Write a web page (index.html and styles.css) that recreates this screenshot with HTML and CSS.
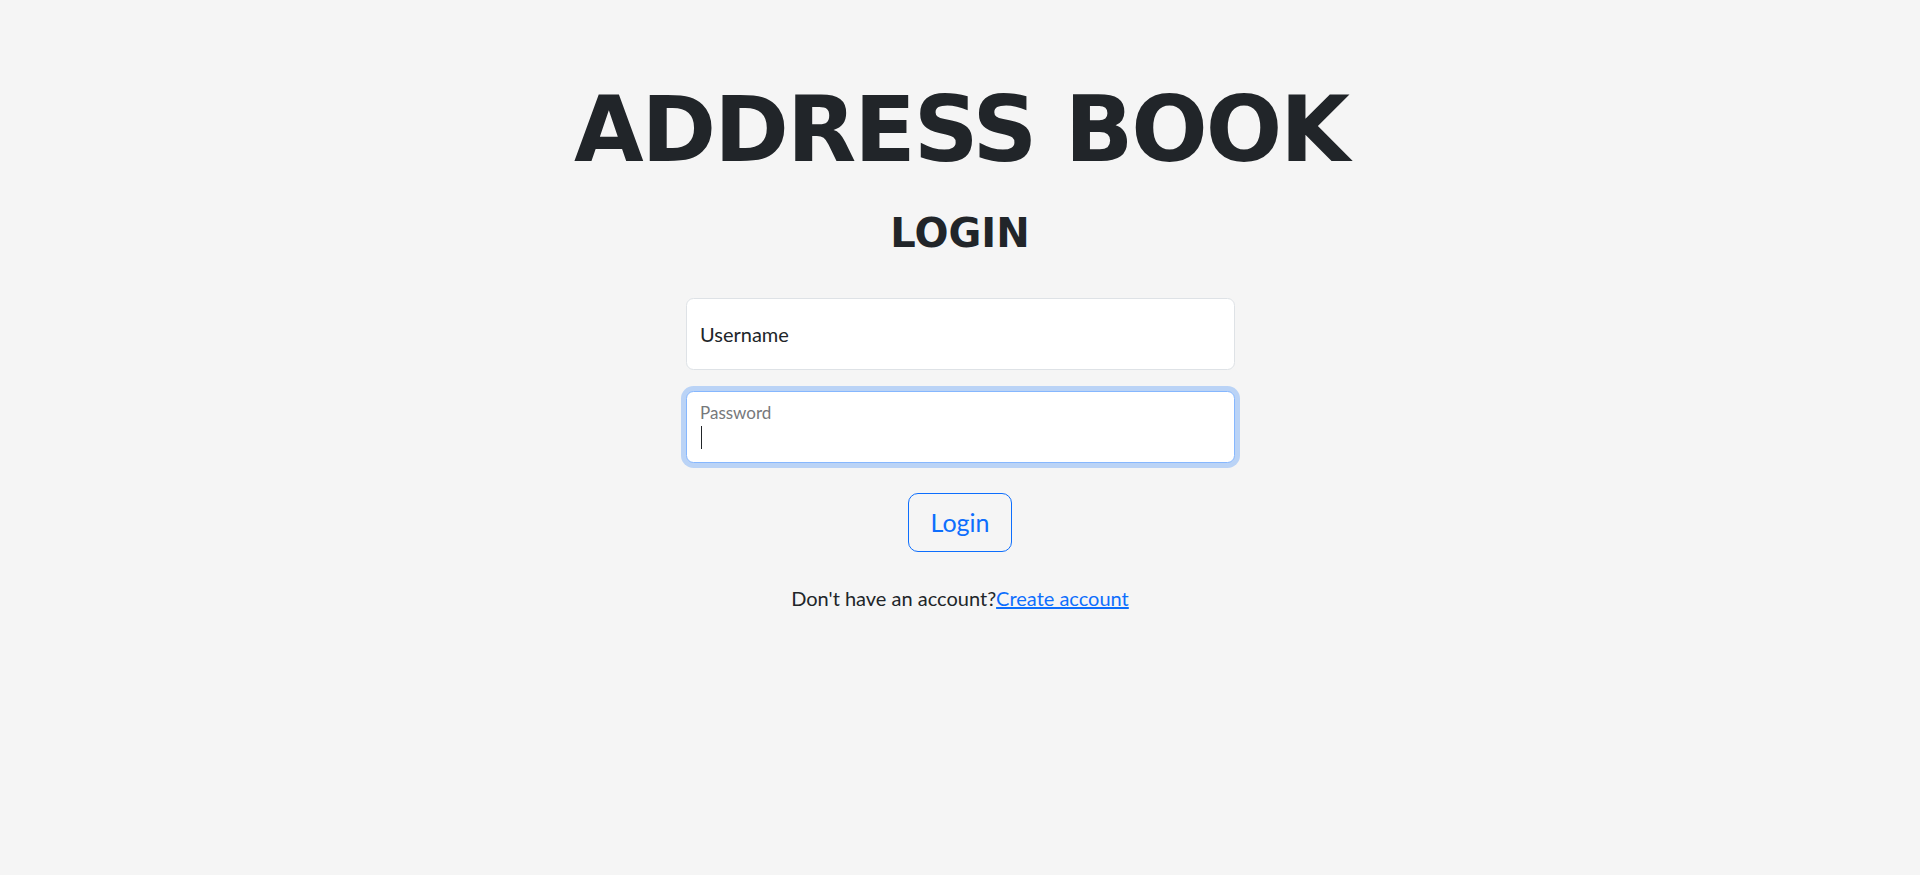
FILE: index.html
```html
<!DOCTYPE html>
<html lang="en">
<head>
<meta charset="utf-8">
<title>Address Book - Login</title>
<link rel="stylesheet" href="styles.css">
</head>
<body>
<main class="page">
  <h1 class="title">ADDRESS BOOK</h1>
  <h2 class="subtitle">LOGIN</h2>
  <form class="login-form">
    <div class="fields">
      <div class="field">
        <input class="control" type="text" id="username" name="username">
        <label class="field-label" for="username">Username</label>
      </div>
      <div class="field field--focused">
        <input class="control" type="password" id="password" name="password">
        <label class="field-label field-label--floated" for="password">Password</label>
        <span class="caret"></span>
      </div>
    </div>
    <div class="actions">
      <button class="btn-outline" type="button">Login</button>
    </div>
    <p class="signup">Don't have an account?<a class="signup-link" href="#">Create account</a></p>
  </form>
</main>
</body>
</html>
```
FILE: styles.css
```css
html, body {
  margin: 0;
  padding: 0;
}

body {
  background: #f5f5f5;
  color: #212529;
  font-family: Lato, "Noto Sans", sans-serif;
  font-size: 20px;
  line-height: 1.5;
}

.page {
  padding-top: 75.5px;
  text-align: center;
}

.title {
  margin: 0;
  font-family: "DejaVu Sans", Verdana, sans-serif;
  font-weight: 700;
  font-size: 90px;
  line-height: 1.2;
  letter-spacing: -2px;
  text-indent: 2px;
}

.subtitle {
  margin: 25.5px 0 0;
  font-family: "DejaVu Sans", Verdana, sans-serif;
  font-weight: 700;
  font-size: 40px;
  line-height: 1.2;
}

.login-form {
  width: 549px;
  margin: 40.5px auto 0;
}

.fields {
  display: flex;
  flex-direction: column;
  gap: 21px;
}

.field {
  position: relative;
  height: 72px;
  text-align: left;
}

.control {
  display: block;
  box-sizing: border-box;
  width: 100%;
  height: 100%;
  margin: 0;
  padding: 0 15px;
  border: 1px solid #dee2e6;
  border-radius: 7.5px;
  background: #fff;
  font: inherit;
  outline: none;
}

.field--focused .control {
  border-color: #86b7fe;
  box-shadow: 0 0 0 5px rgba(13, 110, 253, 0.25);
}

.field-label {
  position: absolute;
  top: 0;
  left: 0;
  padding: 21px 14.5px;
  font-size: 20px;
  line-height: 30px;
  color: #212529;
  pointer-events: none;
}

.field-label--floated {
  padding: 9.5px 14.5px;
  font-size: 17px;
  line-height: 25.5px;
  color: #76787b;
}

.caret {
  position: absolute;
  left: 15px;
  top: 35.5px;
  width: 1px;
  height: 23px;
  background: #212529;
}

.actions {
  margin-top: 30px;
}

.btn-outline {
  margin: 0;
  padding: 10px 21.5px;
  border: 1.25px solid #0d6efd;
  border-radius: 10px;
  background: transparent;
  color: #0d6efd;
  font-family: Lato, "Noto Sans", sans-serif;
  font-size: 25px;
  line-height: 1.5;
  cursor: pointer;
}

.signup {
  margin: 30.5px 0 0;
  font-size: 20px;
  line-height: 30px;
}

.signup-link {
  color: #0d6efd;
  text-decoration: underline;
}
```
